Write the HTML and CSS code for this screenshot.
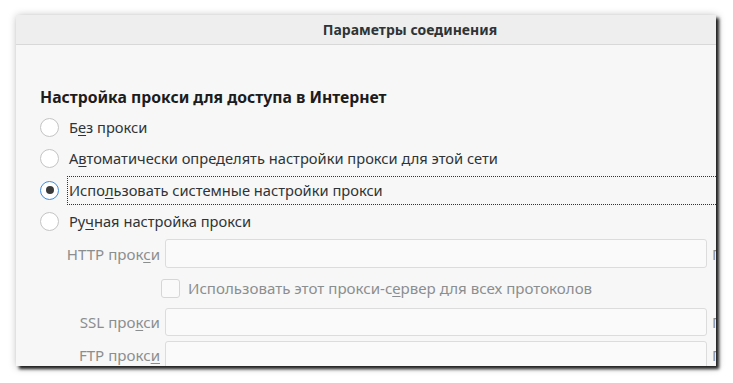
FILE: index.html
```html
<!DOCTYPE html>
<html lang="ru">
<head>
<meta charset="utf-8">
<title>Параметры соединения</title>
<link rel="stylesheet" href="styles.css">
</head>
<body>
<div class="stage">
  <div class="frame">
    <div class="window">
      <div class="titlebar">Параметры соединения</div>
      <div class="content">
        <h1 class="heading">Настройка прокси для доступа в Интернет</h1>
        <div class="radios">
          <div class="radio-row"><span class="radio"></span><span class="rlabel">Б<u>е</u>з прокси</span></div>
          <div class="radio-row"><span class="radio"></span><span class="rlabel">А<u>в</u>томатически определять настройки прокси для этой сети</span></div>
          <div class="radio-row"><span class="radio checked"></span><span class="rlabel focused">Испо<u>л</u>ьзовать системные настройки прокси</span></div>
          <div class="radio-row"><span class="radio"></span><span class="rlabel">Ру<u>ч</u>ная настройка прокси</span></div>
        </div>
        <div class="proxy-grid">
          <span class="plabel">HTTP прок<u>с</u>и</span>
          <span class="input"></span>
          <span class="port">Порт:</span>

          <span></span>
          <div class="check-row"><span class="check"></span><span>Использовать этот прокси-с<u>е</u>рвер для всех протоколов</span></div>
          <span></span>

          <span class="plabel">SSL про<u>к</u>си</span>
          <span class="input"></span>
          <span class="port">Порт:</span>

          <span class="plabel">FTP прокс<u>и</u></span>
          <span class="input"></span>
          <span class="port">Порт:</span>
        </div>
      </div>
    </div>
  </div>
</div>
</body>
</html>
```

FILE: styles.css
```css
html, body {
  margin: 0;
  padding: 0;
  background: #ffffff;
}

body {
  font-family: "Noto Sans", "Open Sans", sans-serif;
  color: #2e3436;
  width: 733px;
  height: 383px;
  overflow: hidden;
}

.stage {
  padding: 15px 0 0 16px;
}

.frame {
  width: 700px;
  height: 351px;
  overflow: hidden;
  background: #f7f7f7;
  box-shadow: 3px 3px 3px rgba(0, 0, 0, 0.85), 1px 1px 8px rgba(0, 0, 0, 0.3);
}

.window {
  width: 788px;
}

.titlebar {
  height: 29px;
  line-height: 29px;
  background: #eeeeee;
  border-bottom: 1px solid #d8d8d8;
  text-align: center;
  font-size: 14px;
  font-weight: bold;
  color: #2e3436;
}

.content {
  padding: 41px 0 0 24px;
}

.heading {
  margin: 0 0 5px 0;
  font-size: 15.75px;
  line-height: 22px;
  font-weight: bold;
  color: #1c1c1c;
}

.radios {
  display: flex;
  flex-direction: column;
  gap: 2.4px;
}

.radio-row {
  display: flex;
  align-items: center;
  height: 29px;
  font-size: 14.67px;
}

.radio {
  box-sizing: border-box;
  width: 19px;
  height: 19px;
  margin-right: 8px;
  border: 1px solid #c4c4c4;
  border-radius: 50%;
  background: #ffffff;
  flex: none;
  display: flex;
  align-items: center;
  justify-content: center;
}

.radio.checked {
  border-color: #3c8ce0;
}

.radio.checked::after {
  content: "";
  width: 8px;
  height: 8px;
  border-radius: 50%;
  background: #3a3a3a;
}

.rlabel {
  flex: 1;
  box-sizing: border-box;
  height: 29px;
  line-height: 27px;
  padding-left: 1px;
  border: 1px solid transparent;
  white-space: nowrap;
}

.rlabel.focused {
  border: 1px dotted #333333;
}

u {
  text-decoration: underline;
  text-underline-offset: 2px;
}

.proxy-grid {
  margin-top: 3px;
  display: grid;
  grid-template-columns: 120px 542px 40px;
  grid-template-rows: 29px 30px 28px 28px;
  column-gap: 5px;
  row-gap: 5px;
  font-size: 15.1px;
  color: #8b8e8f;
}

.plabel {
  text-align: right;
  align-self: center;
  white-space: nowrap;
}

.input {
  box-sizing: border-box;
  border: 1px solid #dcdcdc;
  border-radius: 3px;
  background: #fafafa;
}

.port {
  align-self: center;
  white-space: nowrap;
}

.check-row {
  display: flex;
  align-items: center;
  margin-left: -4px;
  white-space: nowrap;
}

.check {
  box-sizing: border-box;
  width: 19px;
  height: 19px;
  margin-right: 8px;
  border: 1px solid #d6d6d6;
  border-radius: 3px;
  background: #fafafa;
  flex: none;
}
```
